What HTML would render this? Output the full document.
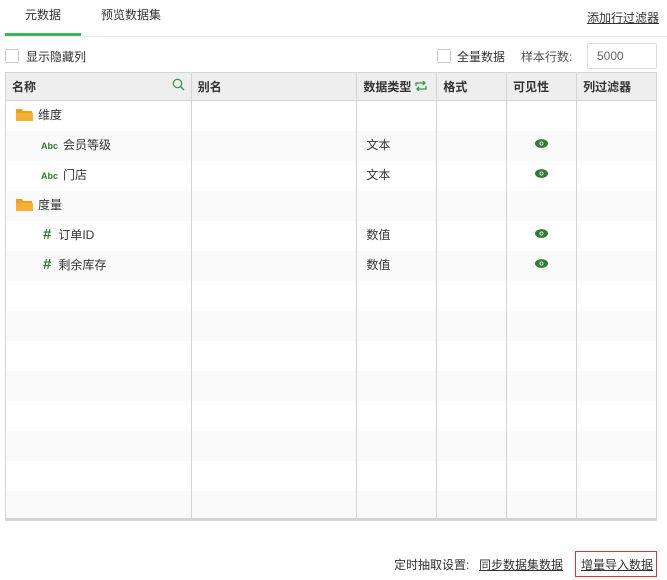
<!DOCTYPE html>
<html><head><meta charset="utf-8"><style>
*{box-sizing:border-box;margin:0;padding:0}
body{width:667px;height:580px;background:#fff;font-family:"Liberation Sans","Noto Sans CJK SC",sans-serif;font-size:12px;color:#333;position:relative;overflow:hidden}
.abs{position:absolute}
.tab{position:absolute;top:6px;font-size:12px}
.cb{position:absolute;width:14px;height:14px;border:1px solid #ccc;border-radius:2px;background:#fff}
table{position:absolute;left:5px;top:72px;width:652px;border-collapse:collapse;border:1px solid #d4d4d4}
td,th{border-left:1px solid #d4d4d4;height:30px;padding:0 6px 3px;text-align:left;font-size:12px;vertical-align:middle}
th{height:28px;padding-bottom:1px;background:#eee;font-weight:bold;color:#333;border-bottom:1px solid #d4d4d4}
tr:nth-child(odd) td{background:#fafafa}
.abc{color:#2e7d32;font-weight:bold;font-size:9px;margin-right:5px}
.hash{color:#2e7d32;font-weight:bold;font-size:15px;margin-right:7px}
u{text-decoration:underline}
</style></head><body>
<div class="tab" style="left:25px">元数据</div>
<div class="tab" style="left:101px">预览数据集</div>
<div class="abs" style="left:5px;top:33px;width:76px;height:3px;background:#3cb55a"></div>
<div class="abs" style="left:0;top:36px;width:667px;height:1px;background:#ebebeb"></div>
<div class="abs" style="left:587px;top:9px;color:#333"><u>添加行过滤器</u></div>
<div class="cb" style="left:5px;top:49px"></div>
<div class="abs" style="left:26px;top:48px">显示隐藏列</div>
<div class="cb" style="left:437px;top:49px"></div>
<div class="abs" style="left:457px;top:48px">全量数据</div>
<div class="abs" style="left:521px;top:48px;color:#555">样本行数:</div>
<div class="abs" style="left:587px;top:43px;width:70px;height:26px;border:1px solid #ddd;border-radius:2px;padding:5px 9px;color:#666">5000</div>
<table>
<tr><th style="width:186px;border-left:none">名称<svg style="float:right" width="13" height="13" viewBox="0 0 13 13"><circle cx="5.5" cy="5.5" r="4.2" fill="none" stroke="#3a9a4a" stroke-width="1.3"/><path d="M8.6 8.6L12 12" stroke="#3a9a4a" stroke-width="1.4"/></svg></th><th style="width:166px">别名</th><th style="width:80px">数据类型 <svg width="12" height="10" viewBox="0 0 12 10"><path d="M1 5V2h9M8 0l2 2-2 2M11 5v3H2M4 10L2 8l2-2" fill="none" stroke="#2e9a3a" stroke-width="1.3"/></svg></th><th style="width:70px">格式</th><th style="width:70px">可见性</th><th style="width:80px">列过滤器</th></tr>
<tr><td style="border-left:none;padding-left:10px"><svg width="17" height="13" viewBox="0 0 17 13" style="vertical-align:-2px;margin-right:5px"><path d="M0 1h6l1 2h9v10H0z" fill="#f0a020"/><path d="M0 5h17v8H0z" fill="#f7b030"/></svg>维度</td><td></td><td></td><td></td><td></td><td></td></tr>
<tr><td style="border-left:none;padding-left:35px"><span class="abc">Abc</span>会员等级</td><td></td><td style="padding-left:9px">文本</td><td></td><td style="text-align:center"><svg width="13" height="9" viewBox="0 0 12 8"><ellipse cx="6" cy="4" rx="6" ry="4" fill="#2e7d32"/><circle cx="6" cy="4" r="1.8" fill="#fff"/><circle cx="6" cy="4" r="1.1" fill="#2e7d32"/></svg></td><td></td></tr>
<tr><td style="border-left:none;padding-left:35px"><span class="abc">Abc</span>门店</td><td></td><td style="padding-left:9px">文本</td><td></td><td style="text-align:center"><svg width="13" height="9" viewBox="0 0 12 8"><ellipse cx="6" cy="4" rx="6" ry="4" fill="#2e7d32"/><circle cx="6" cy="4" r="1.8" fill="#fff"/><circle cx="6" cy="4" r="1.1" fill="#2e7d32"/></svg></td><td></td></tr>
<tr><td style="border-left:none;padding-left:10px"><svg width="17" height="13" viewBox="0 0 17 13" style="vertical-align:-2px;margin-right:5px"><path d="M0 1h6l1 2h9v10H0z" fill="#f0a020"/><path d="M0 5h17v8H0z" fill="#f7b030"/></svg>度量</td><td></td><td></td><td></td><td></td><td></td></tr>
<tr><td style="border-left:none;padding-left:37px"><span class="hash">#</span>订单ID</td><td></td><td style="padding-left:9px">数值</td><td></td><td style="text-align:center"><svg width="13" height="9" viewBox="0 0 12 8"><ellipse cx="6" cy="4" rx="6" ry="4" fill="#2e7d32"/><circle cx="6" cy="4" r="1.8" fill="#fff"/><circle cx="6" cy="4" r="1.1" fill="#2e7d32"/></svg></td><td></td></tr>
<tr><td style="border-left:none;padding-left:37px"><span class="hash">#</span>剩余库存</td><td></td><td style="padding-left:9px">数值</td><td></td><td style="text-align:center"><svg width="13" height="9" viewBox="0 0 12 8"><ellipse cx="6" cy="4" rx="6" ry="4" fill="#2e7d32"/><circle cx="6" cy="4" r="1.8" fill="#fff"/><circle cx="6" cy="4" r="1.1" fill="#2e7d32"/></svg></td><td></td></tr>
<tr><td style="border-left:none"></td><td></td><td></td><td></td><td></td><td></td></tr>
<tr><td style="border-left:none"></td><td></td><td></td><td></td><td></td><td></td></tr>
<tr><td style="border-left:none"></td><td></td><td></td><td></td><td></td><td></td></tr>
<tr><td style="border-left:none"></td><td></td><td></td><td></td><td></td><td></td></tr>
<tr><td style="border-left:none"></td><td></td><td></td><td></td><td></td><td></td></tr>
<tr><td style="border-left:none"></td><td></td><td></td><td></td><td></td><td></td></tr>
<tr><td style="border-left:none"></td><td></td><td></td><td></td><td></td><td></td></tr>
<tr><td style="border-left:none;height:28px"></td><td></td><td></td><td></td><td></td><td></td></tr>
</table>
<div class="abs" style="left:5px;top:518px;width:652px;height:2px;background:#d4d4d4"></div>
<div class="abs" style="left:394px;top:556px">定时抽取设置:</div>
<div class="abs" style="left:479px;top:556px"><u>同步数据集数据</u></div>
<div class="abs" style="left:575px;top:551px;width:82px;height:26px;border:1px solid #d33;padding:4px 0 0 5px"><u>增量导入数据</u></div>
</body></html>
